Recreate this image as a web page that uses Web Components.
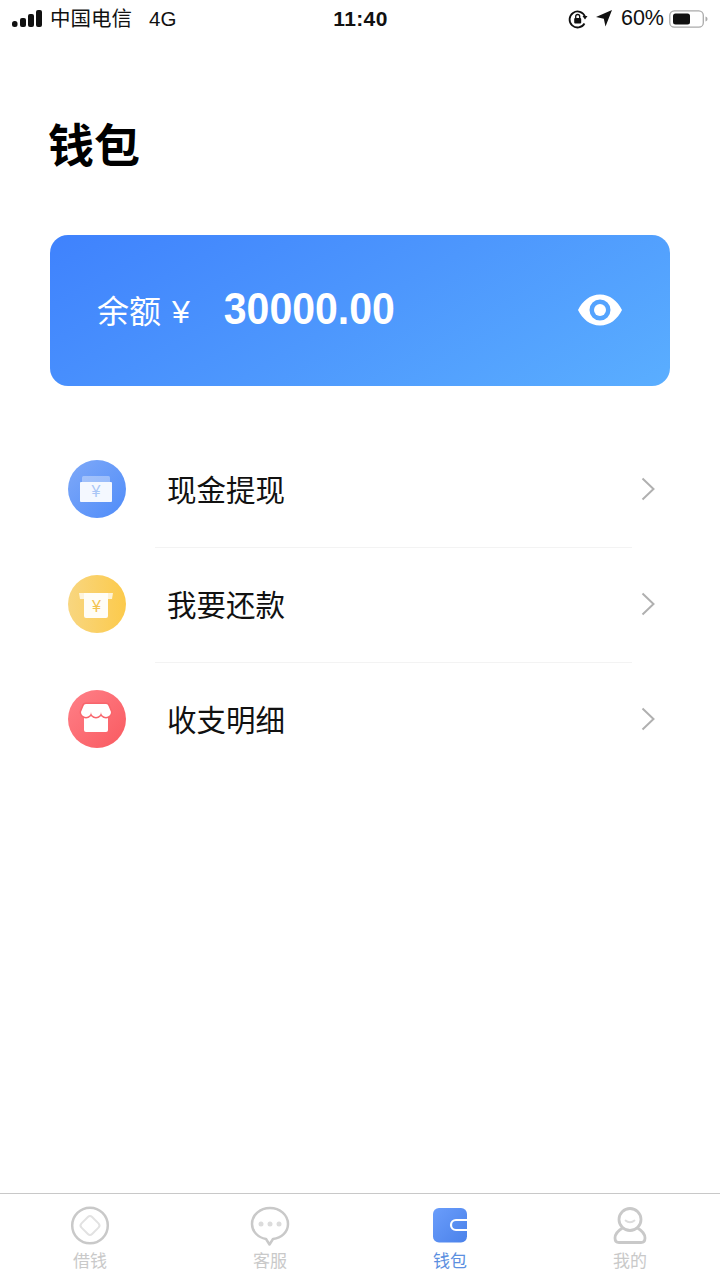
<!DOCTYPE html>
<html lang="zh">
<head>
<meta charset="utf-8">
<title>钱包</title>
<style>
  html, body { margin: 0; padding: 0; background: #fff; }
  body {
    width: 720px;
    height: 1280px;
    overflow: hidden;
    font-family: "Liberation Sans", "Noto Sans CJK SC", sans-serif;
    display: flex;
    flex-direction: column;
  }
</style>
</head>
<body>
<status-bar></status-bar>
<wallet-page></wallet-page>
<tab-bar></tab-bar>

<script>
class StatusBar extends HTMLElement {
  constructor() {
    super();
    this.attachShadow({ mode: "open" });
  }

  connectedCallback() {
    this.shadowRoot.innerHTML = `
      <style>
        :host {
          display: grid;
          grid-template-columns: 1fr auto 1fr;
          align-items: center;
          height: 37px;
          flex: none;
          padding: 0 11px 0 12px;
          color: #111;
          font-size: 20.500px;
        }
        .left, .right { display: flex; align-items: center; }
        .right { justify-content: flex-end; }
        .carrier { margin-left: 8px; margin-bottom: 3px; }
        .net { margin-left: 17px; }
        .time { font-weight: 700; font-size: 21px; letter-spacing: 0.4px; }
        .pct { margin: 0 5px 0 9px; font-size: 21.500px; }
        svg { display: block; }
      </style>
      <div class="left">
        <svg width="30" height="18" viewBox="0 0 30 18">
          <rect x="0" y="11" width="5.500" height="6" rx="2.500" fill="#111"/>
          <rect x="8" y="8" width="6" height="9" rx="2" fill="#111"/>
          <rect x="16" y="4" width="6" height="13" rx="2" fill="#111"/>
          <rect x="24" y="0" width="6" height="17" rx="2" fill="#111"/>
        </svg>
        <span class="carrier">中国电信</span>
        <span class="net">4G</span>
      </div>
      <div class="time">11:40</div>
      <div class="right">
        <svg width="20" height="20" viewBox="0 0 20 20" style="margin-right:8px">
          <path d="M17 7.500A8 8 0 1 0 16.500 14.500" fill="none" stroke="#111" stroke-width="1.800"/>
          <path d="M14.500 7l5 0-2.500 3.500z" fill="#111"/>
          <rect x="6.200" y="9" width="7" height="5.500" rx="1" fill="#111"/>
          <path d="M7.700 9V7.500a2 2 0 0 1 4 0V9" fill="none" stroke="#111" stroke-width="1.300"/>
        </svg>
        <svg width="16" height="17" viewBox="0 0 16 17">
          <path d="M16 0L9.500 16.500 7.800 8.700 0 7z" fill="#111"/>
        </svg>
        <span class="pct">60%</span>
        <svg width="40" height="20" viewBox="0 0 40 20">
          <rect x="0.800" y="1.800" width="33.500" height="16.400" rx="4.500" fill="none" stroke="#aaa" stroke-width="1.300"/>
          <rect x="4" y="4.500" width="17" height="11" rx="2.500" fill="#111"/>
          <path d="M36.500 7.500c1.500.5 2 1.500 2 2.500s-.5 2-2 2.500z" fill="#aaa"/>
        </svg>
      </div>
    `;
  }
}

class BalanceCard extends HTMLElement {
  constructor() {
    super();
    this.attachShadow({ mode: "open" });
  }

  connectedCallback() {
    this.shadowRoot.innerHTML = `
      <style>
        :host {
          display: flex;
          align-items: center;
          height: 151px;
          padding: 0 48px 0 47px;
          border-radius: 18px;
          background: linear-gradient(150deg, #3f82fd 0%, #4d97fd 50%, #5aaeff 100%);
          color: #fff;
        }
        .label { font-size: 32px; line-height: 40px; margin-top: 3px; }
        .yen { font-size: 32px; margin: 3px 0 0 11px; }
        .amount {
          margin: 0 0 3px 34px;
          font-size: 41px;
          font-weight: 700;
          line-height: 48px;
          transform: scaleY(1.06);
        }
        svg { margin: 0 0 2px auto; display: block; }
      </style>
      <span class="label">余额</span>
      <span class="yen">¥</span>
      <span class="amount">30000.00</span>
      <svg width="44" height="32" viewBox="0 0 44 32">
        <path fill-rule="evenodd" fill="#fff" d="M22 0.500C32 0.500 39.500 7 44 16 39.500 25 32 31.500 22 31.500S4.500 25 0 16C4.500 7 12 0.500 22 0.500zM22 5.500A10.500 10.500 0 1 0 22 26.500 10.500 10.500 0 1 0 22 5.500z"/>
        <circle cx="22" cy="16" r="6" fill="#fff"/>
      </svg>
    `;
  }
}

class MenuRow extends HTMLElement {
  constructor() {
    super();
    this.attachShadow({ mode: "open" });
  }

  connectedCallback() {
    this.shadowRoot.innerHTML = `
      <style>
        :host {
          display: flex;
          align-items: center;
          box-sizing: border-box;
          height: 115px;
          padding: 0 15px 3px 18px;
          position: relative;
          font-size: 29.500px;
          color: #111;
        }
        :host([divider])::after {
          content: "";
          position: absolute;
          left: 105px;
          right: 38px;
          bottom: 0;
          height: 1px;
          background: #f3f3f3;
        }
        .icon { width: 58px; height: 58px; flex: none; display: block; }
        .label { margin: 0 0 2px 41px; flex: 1; }
        .chevron { display: block; flex: none; }
      </style>
      <span class="icon"><slot name="icon"></slot></span>
      <span class="label"><slot></slot></span>
      <svg class="chevron" width="14" height="24" viewBox="0 0 14 24">
        <path d="M1.500 1.500L12.500 12 1.500 22.500" fill="none" stroke="#b0b0b0" stroke-width="2"/>
      </svg>
    `;
  }
}

class WalletPage extends HTMLElement {
  constructor() {
    super();
    this.attachShadow({ mode: "open" });
  }

  connectedCallback() {
    this.shadowRoot.innerHTML = `
      <style>
        :host {
          display: flex;
          flex-direction: column;
          flex: 1;
          padding: 0 50px;
        }
        h1 {
          margin: 79px 0 0 -2px;
          font-size: 46px;
          line-height: 60px;
          font-weight: 700;
          color: #000;
        }
        balance-card { margin-top: 59px; }
        .menu { margin-top: 47px; }
        svg { display: block; }
      </style>
      <h1>钱包</h1>
      <balance-card></balance-card>
      <div class="menu">
        <menu-row divider>
          <svg slot="icon" width="58" height="58" viewBox="0 0 58 58">
            <defs><linearGradient id="b" x1="0" y1="0" x2="1" y2="1"><stop offset="0" stop-color="#7fa9f8"/><stop offset="1" stop-color="#4f8cf9"/></linearGradient></defs>
            <circle cx="29" cy="29" r="29" fill="url(#b)"/>
            <rect x="14" y="16" width="28" height="8" rx="1.500" fill="#fff" fill-opacity=".35"/>
            <rect x="12" y="22" width="32" height="20" rx="1" fill="#f4f8ff"/>
            <text x="28" y="37" text-anchor="middle" font-size="16" font-family="Liberation Sans" fill="#a9c6f6">¥</text>
          </svg>
          现金提现
        </menu-row>
        <menu-row divider>
          <svg slot="icon" width="58" height="58" viewBox="0 0 58 58">
            <defs><linearGradient id="y" x1="0" y1="0" x2="1" y2="0"><stop offset="0" stop-color="#f8d680"/><stop offset="1" stop-color="#fcca4b"/></linearGradient></defs>
            <circle cx="29" cy="29" r="29" fill="url(#y)"/>
            <path d="M11 18H45L44 24H12z" fill="#fff" fill-opacity=".75"/>
            <path d="M16 18H40V41a2 2 0 0 1-2 2H18a2 2 0 0 1-2-2z" fill="#fffdf6"/>
            <text x="28.500" y="37" text-anchor="middle" font-size="16" font-family="Liberation Sans" fill="#f3c34e">¥</text>
          </svg>
          我要还款
        </menu-row>
        <menu-row>
          <svg slot="icon" width="58" height="58" viewBox="0 0 58 58">
            <defs><linearGradient id="r" x1="0" y1="0" x2="1" y2="1"><stop offset="0" stop-color="#ff8088"/><stop offset="1" stop-color="#f95a60"/></linearGradient></defs>
            <circle cx="29" cy="29" r="29" fill="url(#r)"/>
            <rect x="16" y="22" width="24" height="20" rx="2" fill="#fff"/>
            <path d="M18 14H38Q40 14 40.500 16L43 22A5 5 0 0 1 33 22 5 5 0 0 1 23 22 5 5 0 0 1 13 22L15.500 16Q16 14 18 14z" fill="#fff" stroke="#f8656c" stroke-width="3" stroke-linejoin="round" paint-order="stroke"/>
          </svg>
          收支明细
        </menu-row>
      </div>
    `;
  }
}

class TabItem extends HTMLElement {
  constructor() {
    super();
    this.attachShadow({ mode: "open" });
  }

  connectedCallback() {
    this.shadowRoot.innerHTML = `
      <style>
        :host {
          display: flex;
          flex-direction: column;
          align-items: center;
          flex: 1;
          color: #c9c9c9;
          font-size: 17px;
        }
        :host([active]) { color: #5b8fe0; }
        .icon { height: 40px; display: block; }
        .text { margin-top: 4px; line-height: 24px; }
      </style>
      <span class="icon"><slot name="icon"></slot></span>
      <span class="text"><slot></slot></span>
    `;
  }
}

class TabBar extends HTMLElement {
  constructor() {
    super();
    this.attachShadow({ mode: "open" });
  }

  connectedCallback() {
    this.shadowRoot.innerHTML = `
      <style>
        :host {
          display: flex;
          flex: none;
          height: 74px;
          padding-top: 12px;
          background: #fff;
          border-top: 1px solid #c8c8c8;
        }
        svg { display: block; }
      </style>
      <tab-item>
        <svg slot="icon" width="40" height="40" viewBox="0 0 40 40">
          <circle cx="20" cy="19.500" r="17.800" fill="none" stroke="#c9c9c9" stroke-width="2.500"/>
          <rect x="12.500" y="12" width="15" height="15" rx="3" transform="rotate(45 20 19.500)" fill="none" stroke="#e2e2e2" stroke-width="2"/>
        </svg>
        借钱
      </tab-item>
      <tab-item>
        <svg slot="icon" width="40" height="40" viewBox="0 0 40 40">
          <path d="M20 2C10 2 2 9 2 18 2 25.500 8 31.500 16 33L19.500 38.500 23 33C31.500 32 38 26 38 18 38 9 30 2 20 2z" fill="none" stroke="#c9c9c9" stroke-width="2.500" stroke-linejoin="round"/>
          <circle cx="11" cy="18" r="2.500" fill="#dcdcdc"/>
          <circle cx="20" cy="18" r="2.500" fill="#dcdcdc"/>
          <circle cx="29" cy="18" r="2.500" fill="#dcdcdc"/>
        </svg>
        客服
      </tab-item>
      <tab-item active>
        <svg slot="icon" width="40" height="40" viewBox="0 0 40 40">
          <defs><linearGradient id="w" x1="0" y1="0" x2="1" y2="1"><stop offset="0" stop-color="#6a9dfb"/><stop offset="1" stop-color="#4b82ea"/></linearGradient></defs>
          <rect x="3" y="2" width="34" height="34.500" rx="6" fill="url(#w)"/>
          <path d="M37 14H26a5 5 0 0 0 0 10H37" fill="none" stroke="#fff" stroke-width="2.200"/>
        </svg>
        钱包
      </tab-item>
      <tab-item>
        <svg slot="icon" width="40" height="40" viewBox="0 0 40 40">
          <circle cx="20" cy="13.500" r="11" fill="none" stroke="#c9c9c9" stroke-width="2.800"/>
          <path d="M12.500 22C7.500 25 5 29 5 32 5 35 6.500 36.500 9 36.500H31C33.500 36.500 35 35 35 32 35 29 32.500 25 27.500 22" fill="none" stroke="#c9c9c9" stroke-width="2.800" stroke-linecap="round"/>
          <path d="M15.500 14.500C18 16.800 22 16.800 24.500 14.500" fill="none" stroke="#dcdcdc" stroke-width="1.800" stroke-linecap="round"/>
        </svg>
        我的
      </tab-item>
    `;
  }
}

customElements.define("status-bar", StatusBar);
customElements.define("balance-card", BalanceCard);
customElements.define("menu-row", MenuRow);
customElements.define("wallet-page", WalletPage);
customElements.define("tab-item", TabItem);
customElements.define("tab-bar", TabBar);
</script>
</body>
</html>
